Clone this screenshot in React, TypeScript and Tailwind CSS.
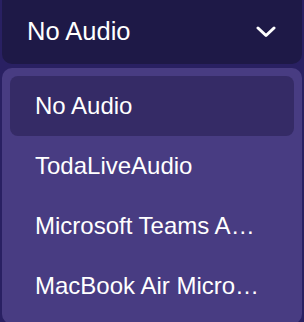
export default function App() {
  const items = ["No Audio", "TodaLiveAudio", "Microsoft Teams Audio", "MacBook Air Microphone"];
  const selected = "No Audio";

  return (
    <div className="w-[304px] h-[322px] overflow-hidden bg-[#292062] px-[2px] font-['Liberation_Sans',Arial,sans-serif] text-white">
      <div className="flex h-[64px] items-center justify-between rounded-b-[10px] bg-[#1e1947] pl-[25px] pr-[26px]">
        <span className="text-[25.5px] leading-normal -mt-[2px]">{selected}</span>
        <svg width="20" height="12" viewBox="0 0 20 12" fill="none">
          <path d="M2 2 L10 9.5 L18 2" stroke="white" strokeWidth="3" strokeLinecap="round" strokeLinejoin="round" />
        </svg>
      </div>
      <div className="mt-[4px] rounded-[10px] bg-[#483c82] p-[8px]">
        {items.map((item) => (
          <div
            key={item}
            className={`flex h-[60px] items-center rounded-[8px] pl-[25px] pr-[30px] ${
              item === selected ? "bg-[#352b66]" : ""
            }`}
          >
            <span className="truncate text-[24px] leading-normal">{item}</span>
          </div>
        ))}
      </div>
    </div>
  );
}
